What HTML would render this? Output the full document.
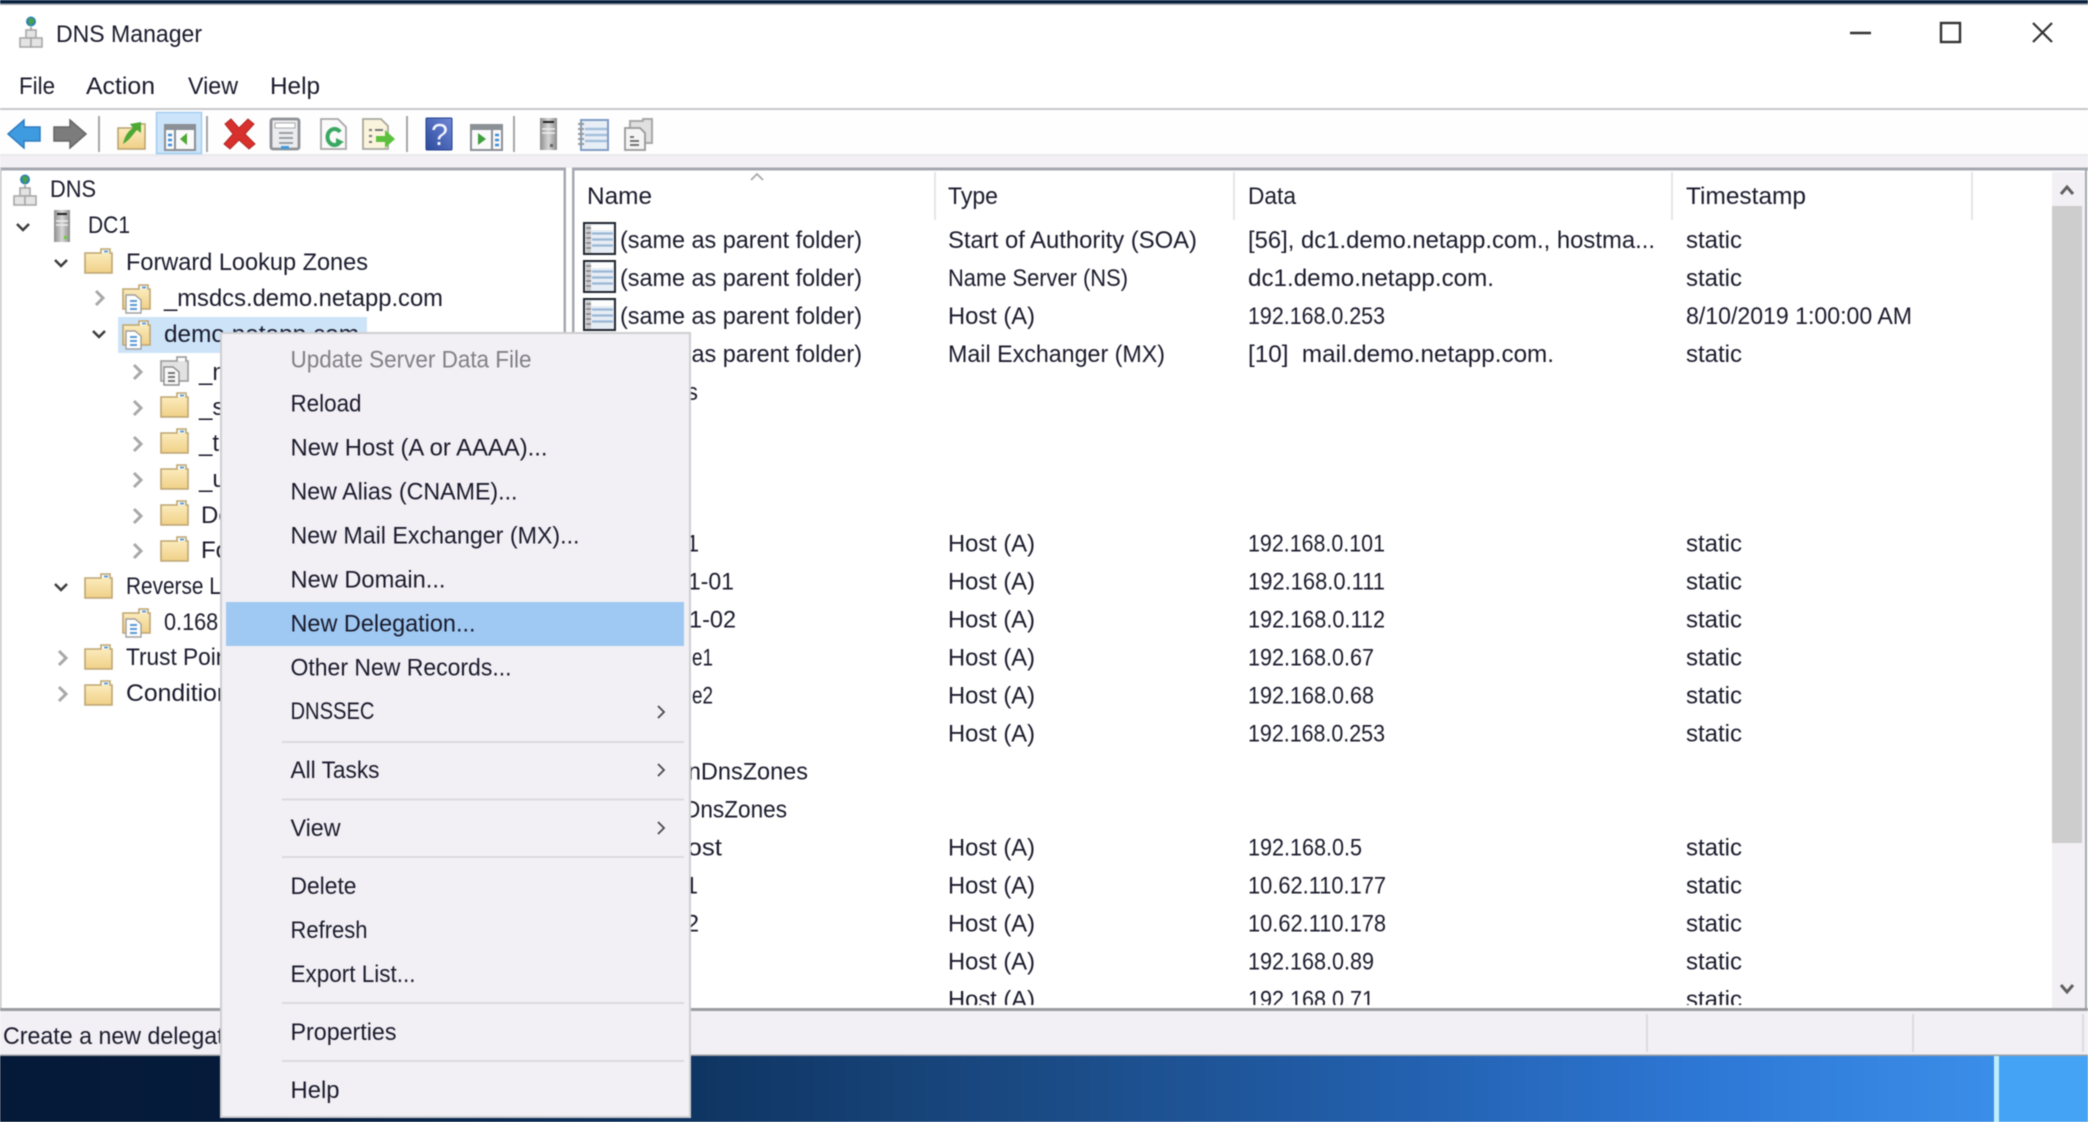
<!DOCTYPE html>
<html lang="en"><head><meta charset="utf-8"><title>DNS Manager</title>
<style>
html,body{margin:0;padding:0;background:#fff;width:2088px;height:1122px;overflow:hidden}
svg{display:block;filter:blur(.55px)}
text{font-family:"Liberation Sans",sans-serif;font-size:24px;fill:#1a1a2c}
</style></head><body>
<svg xmlns="http://www.w3.org/2000/svg" width="2088" height="1122" viewBox="0 0 2088 1122">
<defs>
<linearGradient id="wp" x1="0" x2="1" y1="0" y2="0">
<stop offset="0" stop-color="#051a38"/><stop offset=".12" stop-color="#061c3b"/><stop offset=".33" stop-color="#0f3562"/><stop offset=".5" stop-color="#1b4b85"/><stop offset=".67" stop-color="#2360ae"/><stop offset=".82" stop-color="#2e78d6"/><stop offset=".95" stop-color="#3a8de8"/><stop offset="1" stop-color="#45a2f4"/>
</linearGradient>
<linearGradient id="fy" x1="0" x2="0" y1="0" y2="1"><stop offset="0" stop-color="#fdf0c6"/><stop offset="1" stop-color="#f0d088"/></linearGradient>
<linearGradient id="sv" x1="0" x2="1" y1="0" y2="0"><stop offset="0" stop-color="#8d8d8d"/><stop offset=".5" stop-color="#d6d6d6"/><stop offset="1" stop-color="#8a8a8a"/></linearGradient>
<linearGradient id="hp" x1="0" x2="1" y1="1" y2="0"><stop offset="0" stop-color="#2c4a9c"/><stop offset="1" stop-color="#7088d8"/></linearGradient>
<g id="folder">
<path d="M1 5H17V1H26V5H28V25H1Z" fill="url(#fy)" stroke="#bda673" stroke-width="1.6"/>
<rect x="18" y="2" width="7" height="3" fill="#fff"/><rect x="20" y="2.5" width="4" height="2" fill="#5fa0d8"/>
</g>
<g id="zone">
<path d="M1 5H17V1H26V5H28V25H1Z" fill="url(#fy)" stroke="#bda673" stroke-width="1.6"/>
<rect x="18" y="2" width="7" height="3" fill="#fff"/><rect x="20" y="2.5" width="4" height="2" fill="#5fa0d8"/>
<path d="M4 11H13L19 16V29H4Z" fill="#fff" stroke="#a0a0a0" stroke-width="1.4"/>
<path d="M8 17h7M8 21h7M8 25h7" stroke="#5a9ad6" stroke-width="2"/>
</g>
<g id="zoneg">
<path d="M1 5H17V1H26V5H28V25H1Z" fill="#e2e2e2" stroke="#a2a2a2" stroke-width="1.8"/>
<rect x="18" y="2" width="7" height="3" fill="#fff"/>
<path d="M4 11H13L19 16V29H4Z" fill="#f8f8f8" stroke="#8e8e8e" stroke-width="1.4"/>
<path d="M8 17h7M8 21h7M8 25h7" stroke="#777" stroke-width="2"/>
</g>
<g id="dns">
<circle cx="12" cy="5.500" r="5" fill="#2f7fb8"/><path d="M9.500 2l5 .5 1 3-4 4.500-2-4z" fill="#48a248"/>
<rect x="11" y="11" width="2" height="4" fill="#aaa"/>
<rect x="7" y="14" width="10" height="8" fill="#e4e4e4" stroke="#a8a8a8" stroke-width="1.6"/>
<rect x="1" y="22" width="11" height="9" fill="#e4e4e4" stroke="#a8a8a8" stroke-width="1.6"/>
<rect x="12" y="22" width="11" height="9" fill="#e4e4e4" stroke="#a8a8a8" stroke-width="1.6"/>
</g>
<g id="rec">
<rect x="1" y="1" width="31" height="31" fill="#e6edf5" stroke="#20242e" stroke-width="2"/>
<rect x="3" y="3" width="5" height="28" fill="#c9c9c9"/>
<path d="M3 6h5M3 11h5M3 16h5M3 21h5M3 26h5" stroke="#777" stroke-width="1.200"/>
<rect x="8" y="3" width="22" height="5" fill="#fdfdfd"/>
<path d="M9 11.500h21M9 17.500h21M9 23.500h21" stroke="#9ab8d6" stroke-width="2.200"/>
</g>
</defs>

<!-- backdrop -->
<rect width="2088" height="1122" fill="#fff"/>
<rect width="2088" height="4" fill="#0a2342"/>
<rect y="3.500" width="2088" height="1.500" fill="#a6a8ac"/>
<rect y="1056" width="2088" height="66" fill="url(#wp)"/>
<rect x="1994" y="1056" width="5" height="66" fill="#bdeefb"/>
<rect x="1999" y="1056" width="89" height="66" fill="#45a3f5"/>

<!-- title -->
<use href="#dns" x="19" y="16"/>
<text x="56" y="42" textLength="146" lengthAdjust="spacingAndGlyphs">DNS Manager</text>
<path d="M1850 33h21" stroke="#333" stroke-width="2.400"/>
<rect x="1941" y="23" width="19" height="19" fill="none" stroke="#333" stroke-width="2.400"/>
<path d="M2033 23L2052 42M2052 23L2033 42" stroke="#333" stroke-width="2.200"/>

<!-- menubar -->
<text x="19" y="94" textLength="36" lengthAdjust="spacingAndGlyphs">File</text>
<text x="86" y="94" textLength="69" lengthAdjust="spacingAndGlyphs">Action</text>
<text x="188" y="94" textLength="50" lengthAdjust="spacingAndGlyphs">View</text>
<text x="270" y="94" textLength="50" lengthAdjust="spacingAndGlyphs">Help</text>
<rect y="108" width="2088" height="2" fill="#c8c8cc"/>

<!-- toolbar -->
<rect y="110" width="2088" height="44" fill="#fefefe"/>
<rect y="154" width="2088" height="2" fill="#e9e9ec"/>
<rect y="156" width="2088" height="12" fill="#f2f0f4"/>
<path d="M8 134L24 120V127H40V141H24V148Z" fill="#3f9be0" stroke="#2d7cc0" stroke-width="1.500"/>
<path d="M86 134L70 120V127H54V141H70V148Z" fill="#7c7c7c" stroke="#666" stroke-width="1.500"/>
<path d="M99 116v36M207 116v36M407 116v36M514 116v36" stroke="#a4a6aa" stroke-width="2"/>
<path d="M118 128H136V124H145V149H118Z" fill="url(#fy)" stroke="#b8a26c" stroke-width="1.500"/>
<path d="M123 144C125 134 130 130 133 128L130 124L141 122L141 133L137 130C133 134 130 140 123 144Z" fill="#4ea834"/>
<rect x="156.500" y="112.500" width="45" height="41" fill="#cce4f9" stroke="#a3cdf0" stroke-width="1.500"/>
<g>
<rect x="165" y="125" width="30" height="25" fill="#fafafa" stroke="#8b8f96" stroke-width="2"/><rect x="165" y="125" width="30" height="5" fill="#8b8f96"/>
<path d="M175 130v20" stroke="#8b8f96" stroke-width="2"/>
<path d="M168 135h4M168 140h4M168 145h4" stroke="#3f8fd8" stroke-width="2.500"/>
<path d="M187 133V145L180 139Z" fill="#4ea834"/>
</g>
<path d="M225 124L231 119L239 128L248 119L254 124L245 134L255 144L249 149L239 140L230 149L224 144L233 134Z" fill="#d8302c" stroke="#b02a26"/>
<g>
<rect x="271" y="119" width="28" height="30" rx="2" fill="#ececee" stroke="#8e9298" stroke-width="2.800"/>
<rect x="275" y="123" width="20" height="5" fill="#fff" stroke="#aaa"/>
<path d="M279 133h14M279 138h14M279 143h14" stroke="#9aa0a8" stroke-width="2"/>
<rect x="281" y="146" width="8" height="3" fill="#3f9be0"/>
</g>
<g>
<path d="M321 119H338L346 127V149H321Z" fill="#fafafa" stroke="#a8a8a8" stroke-width="1.800"/>
<path d="M340 132A7 8 0 1 0 340 142" fill="none" stroke="#3aa860" stroke-width="4"/>
<path d="M336 146L344 142L336 138Z" fill="#3aa860"/>
</g>
<g>
<path d="M363 119H381L388 126V149H363Z" fill="#faf4dc" stroke="#a8a8a0" stroke-width="1.800"/>
<path d="M369 130h3M369 136h3M369 142h3M375 130h8" stroke="#777" stroke-width="2"/>
<path d="M376 136H385V130L395 139L385 148V142H376Z" fill="#5cc03c"/>
</g>
<rect x="426" y="118" width="26" height="32" rx="1" fill="url(#hp)" stroke="#23408c" stroke-width="1"/>
<text x="431" y="145" style="font-size:31px;fill:#f4f6fc" textLength="17" lengthAdjust="spacingAndGlyphs">?</text>
<g>
<rect x="471" y="125" width="31" height="25" fill="#fafafa" stroke="#8b8f96" stroke-width="2"/><rect x="471" y="125" width="31" height="5" fill="#8b8f96"/>
<path d="M492 130v20" stroke="#8b8f96" stroke-width="2"/>
<path d="M495 135h4M495 140h4M495 145h4" stroke="#3f8fd8" stroke-width="2.500"/>
<path d="M478 133V145L486 139Z" fill="#3da03a"/>
</g>
<g>
<rect x="540" y="118" width="17" height="32" fill="url(#sv)"/>
<path d="M543 122h11" stroke="#222" stroke-width="2"/><path d="M542 129h13M542 133h13" stroke="#eee" stroke-width="1.500"/>
<rect x="550" y="144" width="3" height="3" fill="#666"/>
</g>
<g>
<rect x="581" y="120" width="27" height="30" fill="#e8eef6" stroke="#7f9cc4" stroke-width="2"/>
<path d="M578 124h6M578 129h6M578 134h6M578 139h6M578 144h6" stroke="#999" stroke-width="2"/>
<path d="M585 129h22M585 135h22M585 141h22" stroke="#a4c0dc" stroke-width="2.500"/>
</g>
<g>
<path d="M630 121H643V119H652V143H630Z" fill="#e0e0e0" stroke="#a8a8a8" stroke-width="2"/>
<path d="M625 128H640L645 133V150H625Z" fill="#f4f4f4" stroke="#989898" stroke-width="1.800"/>
<path d="M630 137h4M630 141h9M630 145h9" stroke="#666" stroke-width="1.800"/>
</g>

<!-- left pane -->
<rect x="0" y="168" width="566" height="842" fill="#fff"/>
<rect x="0" y="167.500" width="566" height="3" fill="#a6a8b2"/>
<rect x="563.500" y="168" width="2.500" height="842" fill="#a6a8b2"/>
<rect x="0" y="168" width="1.500" height="842" fill="#c4c4cc"/>
<!-- right pane -->
<rect x="572" y="168" width="1516" height="842" fill="#fff"/>
<rect x="572" y="167.500" width="1516" height="3" fill="#a6a8b2"/>
<rect x="572" y="168" width="2.500" height="842" fill="#a6a8b2"/>
<rect x="2085" y="168" width="2" height="842" fill="#a6a8b2"/>

<!-- tree -->
<use href="#dns" x="13" y="174"/>
<text x="50" y="197" textLength="46" lengthAdjust="spacingAndGlyphs">DNS</text>
<path d="M17 224L23 230L29 224" fill="none" stroke="#3c3c3c" stroke-width="2.500"/>
<rect x="54" y="210" width="16" height="32" fill="url(#sv)"/><path d="M57 214h10" stroke="#222" stroke-width="2"/><path d="M56 221h12M56 225h12" stroke="#eee" stroke-width="1.500"/><rect x="64" y="236" width="3" height="3" fill="#6ccb3c"/>
<text x="88" y="233" textLength="42" lengthAdjust="spacingAndGlyphs">DC1</text>
<path d="M55 260L61 266L67 260" fill="none" stroke="#3c3c3c" stroke-width="2.500"/>
<use href="#folder" x="84" y="248"/>
<text x="126" y="270" textLength="242" lengthAdjust="spacingAndGlyphs">Forward Lookup Zones</text>
<path d="M96 291L103 298L96 305" fill="none" stroke="#a8a8a8" stroke-width="3"/>
<use href="#zone" x="122" y="284"/>
<text x="164" y="306" textLength="279" lengthAdjust="spacingAndGlyphs">_msdcs.demo.netapp.com</text>
<rect x="118" y="317" width="249" height="36" fill="#cde4f8"/>
<path d="M93 331L99 337L105 331" fill="none" stroke="#3c3c3c" stroke-width="2.500"/>
<use href="#zone" x="122" y="320"/>
<text x="164" y="342" textLength="195" lengthAdjust="spacingAndGlyphs">demo.netapp.com</text>
<path d="M134 365L141 372L134 379M134 401L141 408L134 415M134 437L141 444L134 451M134 473L141 480L134 487M134 509L141 516L134 523M134 544L141 551L134 558" fill="none" stroke="#a8a8a8" stroke-width="3"/>
<use href="#zoneg" x="160" y="356"/>
<use href="#folder" x="160" y="392"/>
<use href="#folder" x="160" y="428"/>
<use href="#folder" x="160" y="464"/>
<use href="#folder" x="160" y="500"/>
<use href="#folder" x="160" y="536"/>
<text x="199" y="380">_msdcs</text>
<text x="199" y="415">_sites</text>
<text x="199" y="451">_tcp</text>
<text x="199" y="487">_udp</text>
<text x="201" y="523">DomainDnsZones</text>
<text x="201" y="558">ForestDnsZones</text>
<path d="M55 584L61 590L67 584" fill="none" stroke="#3c3c3c" stroke-width="2.500"/>
<use href="#folder" x="84" y="573"/>
<text x="126" y="594" textLength="215" lengthAdjust="spacingAndGlyphs">Reverse Lookup Zones</text>
<use href="#zone" x="122" y="608"/>
<text x="164" y="630" textLength="218" lengthAdjust="spacingAndGlyphs">0.168.192.in-addr.arpa</text>
<path d="M59 651L66 658L59 665M59 687L66 694L59 701" fill="none" stroke="#a8a8a8" stroke-width="3"/>
<use href="#folder" x="84" y="644"/>
<text x="126" y="665" textLength="120" lengthAdjust="spacingAndGlyphs">Trust Points</text>
<use href="#folder" x="84" y="680"/>
<text x="126" y="701" textLength="256" lengthAdjust="spacingAndGlyphs">Conditional Forwarders</text>

<!-- list header -->
<path d="M935 172v48M1234 172v48M1672 172v48M1972 172v48" stroke="#e6e6ea" stroke-width="2"/>
<path d="M751 180L757 174L763 180" fill="none" stroke="#a8a8a8" stroke-width="1.800"/>
<text x="587" y="204" textLength="65" lengthAdjust="spacingAndGlyphs">Name</text>
<text x="948" y="204" textLength="50" lengthAdjust="spacingAndGlyphs">Type</text>
<text x="1248" y="204" textLength="48" lengthAdjust="spacingAndGlyphs">Data</text>
<text x="1686" y="204" textLength="120" lengthAdjust="spacingAndGlyphs">Timestamp</text>

<!-- list rows -->
<clipPath id="lc"><rect x="574" y="172" width="1478" height="833"/></clipPath>
<g clip-path="url(#lc)">
<use href="#rec" x="583" y="222"/><use href="#rec" x="583" y="260"/><use href="#rec" x="583" y="298"/>
<text x="620" y="248" textLength="242" lengthAdjust="spacingAndGlyphs">(same as parent folder)</text>
<text x="620" y="286" textLength="242" lengthAdjust="spacingAndGlyphs">(same as parent folder)</text>
<text x="620" y="324" textLength="242" lengthAdjust="spacingAndGlyphs">(same as parent folder)</text>
<text x="620" y="362" textLength="242" lengthAdjust="spacingAndGlyphs">(same as parent folder)</text>
<text x="620" y="400" textLength="78" lengthAdjust="spacingAndGlyphs">_msdcs</text>
<text x="620" y="551.500" textLength="79" lengthAdjust="spacingAndGlyphs">cluster1</text>
<text x="620" y="589.500" textLength="114" lengthAdjust="spacingAndGlyphs">cluster1-01</text>
<text x="620" y="627.500" textLength="116" lengthAdjust="spacingAndGlyphs">cluster1-02</text>
<text x="692" y="665.500" textLength="21" lengthAdjust="spacingAndGlyphs">e1</text>
<text x="692" y="703.500" textLength="21" lengthAdjust="spacingAndGlyphs">e2</text>
<text x="620" y="779.500" textLength="188" lengthAdjust="spacingAndGlyphs">DomainDnsZones</text>
<text x="620" y="817.500" textLength="167" lengthAdjust="spacingAndGlyphs">ForestDnsZones</text>
<text x="620" y="855.500" textLength="102" lengthAdjust="spacingAndGlyphs">localhost</text>
<text x="620" y="893.500" textLength="78" lengthAdjust="spacingAndGlyphs">server1</text>
<text x="620" y="931.500" textLength="79" lengthAdjust="spacingAndGlyphs">server2</text>

<text x="948" y="248" textLength="249" lengthAdjust="spacingAndGlyphs">Start of Authority (SOA)</text>
<text x="948" y="286" textLength="180" lengthAdjust="spacingAndGlyphs">Name Server (NS)</text>
<text x="948" y="324" textLength="87" lengthAdjust="spacingAndGlyphs">Host (A)</text>
<text x="948" y="362" textLength="217" lengthAdjust="spacingAndGlyphs">Mail Exchanger (MX)</text>
<text x="948" y="551.500" textLength="87" lengthAdjust="spacingAndGlyphs">Host (A)</text>
<text x="948" y="589.500" textLength="87" lengthAdjust="spacingAndGlyphs">Host (A)</text>
<text x="948" y="627.500" textLength="87" lengthAdjust="spacingAndGlyphs">Host (A)</text>
<text x="948" y="665.500" textLength="87" lengthAdjust="spacingAndGlyphs">Host (A)</text>
<text x="948" y="703.500" textLength="87" lengthAdjust="spacingAndGlyphs">Host (A)</text>
<text x="948" y="741.500" textLength="87" lengthAdjust="spacingAndGlyphs">Host (A)</text>
<text x="948" y="855.500" textLength="87" lengthAdjust="spacingAndGlyphs">Host (A)</text>
<text x="948" y="893.500" textLength="87" lengthAdjust="spacingAndGlyphs">Host (A)</text>
<text x="948" y="931.500" textLength="87" lengthAdjust="spacingAndGlyphs">Host (A)</text>
<text x="948" y="969.500" textLength="87" lengthAdjust="spacingAndGlyphs">Host (A)</text>
<text x="948" y="1007.500" textLength="87" lengthAdjust="spacingAndGlyphs">Host (A)</text>

<text x="1248" y="248" textLength="407" lengthAdjust="spacingAndGlyphs">[56], dc1.demo.netapp.com., hostma...</text>
<text x="1248" y="286" textLength="246" lengthAdjust="spacingAndGlyphs">dc1.demo.netapp.com.</text>
<text x="1248" y="324" textLength="137" lengthAdjust="spacingAndGlyphs">192.168.0.253</text>
<text x="1248" y="362" textLength="306" lengthAdjust="spacingAndGlyphs" xml:space="preserve">[10]  mail.demo.netapp.com.</text>
<text x="1248" y="551.500" textLength="137" lengthAdjust="spacingAndGlyphs">192.168.0.101</text>
<text x="1248" y="589.500" textLength="137" lengthAdjust="spacingAndGlyphs">192.168.0.111</text>
<text x="1248" y="627.500" textLength="137" lengthAdjust="spacingAndGlyphs">192.168.0.112</text>
<text x="1248" y="665.500" textLength="126" lengthAdjust="spacingAndGlyphs">192.168.0.67</text>
<text x="1248" y="703.500" textLength="126" lengthAdjust="spacingAndGlyphs">192.168.0.68</text>
<text x="1248" y="741.500" textLength="137" lengthAdjust="spacingAndGlyphs">192.168.0.253</text>
<text x="1248" y="855.500" textLength="114" lengthAdjust="spacingAndGlyphs">192.168.0.5</text>
<text x="1248" y="893.500" textLength="138" lengthAdjust="spacingAndGlyphs">10.62.110.177</text>
<text x="1248" y="931.500" textLength="138" lengthAdjust="spacingAndGlyphs">10.62.110.178</text>
<text x="1248" y="969.500" textLength="126" lengthAdjust="spacingAndGlyphs">192.168.0.89</text>
<text x="1248" y="1007.500" textLength="126" lengthAdjust="spacingAndGlyphs">192.168.0.71</text>

<text x="1686" y="248" textLength="56" lengthAdjust="spacingAndGlyphs">static</text>
<text x="1686" y="286" textLength="56" lengthAdjust="spacingAndGlyphs">static</text>
<text x="1686" y="324" textLength="226" lengthAdjust="spacingAndGlyphs">8/10/2019 1:00:00 AM</text>
<text x="1686" y="362" textLength="56" lengthAdjust="spacingAndGlyphs">static</text>
<text x="1686" y="551.500" textLength="56" lengthAdjust="spacingAndGlyphs">static</text>
<text x="1686" y="589.500" textLength="56" lengthAdjust="spacingAndGlyphs">static</text>
<text x="1686" y="627.500" textLength="56" lengthAdjust="spacingAndGlyphs">static</text>
<text x="1686" y="665.500" textLength="56" lengthAdjust="spacingAndGlyphs">static</text>
<text x="1686" y="703.500" textLength="56" lengthAdjust="spacingAndGlyphs">static</text>
<text x="1686" y="741.500" textLength="56" lengthAdjust="spacingAndGlyphs">static</text>
<text x="1686" y="855.500" textLength="56" lengthAdjust="spacingAndGlyphs">static</text>
<text x="1686" y="893.500" textLength="56" lengthAdjust="spacingAndGlyphs">static</text>
<text x="1686" y="931.500" textLength="56" lengthAdjust="spacingAndGlyphs">static</text>
<text x="1686" y="969.500" textLength="56" lengthAdjust="spacingAndGlyphs">static</text>
<text x="1686" y="1007.500" textLength="56" lengthAdjust="spacingAndGlyphs">static</text>
</g>

<!-- scrollbar -->
<rect x="2052" y="172" width="33" height="836" fill="#f2f0f4"/>
<rect x="2052" y="206" width="30" height="637" fill="#cdcdcd"/>
<path d="M2061 194L2067 187L2073 194" fill="none" stroke="#606060" stroke-width="3"/>
<path d="M2061 985L2067 992L2073 985" fill="none" stroke="#606060" stroke-width="3"/>

<!-- status bar -->
<rect x="0" y="1008" width="2088" height="48" fill="#f2f0f4"/>
<rect x="0" y="1008" width="2088" height="3" fill="#9a9ca0"/>
<rect x="0" y="1054.500" width="2088" height="1.500" fill="#a0a2a6"/>
<path d="M1647 1014v38M1913 1014v38M2083 1014v38" stroke="#d8d8dc" stroke-width="1.600"/>
<text x="3" y="1044" textLength="258" lengthAdjust="spacingAndGlyphs">Create a new delegation.</text>

<!-- context menu -->
<rect x="221" y="333" width="469" height="784" fill="#f2f0f4" stroke="#cfcfd2" stroke-width="2"/>
<rect x="226" y="602" width="458" height="44" fill="#9fc9f2"/>
<text x="290.500" y="367.600" textLength="241" lengthAdjust="spacingAndGlyphs" style="fill:#808086">Update Server Data File</text>
<text x="290.500" y="411.600" textLength="71" lengthAdjust="spacingAndGlyphs">Reload</text>
<text x="290.500" y="455.600" textLength="257" lengthAdjust="spacingAndGlyphs">New Host (A or AAAA)...</text>
<text x="290.500" y="499.600" textLength="227" lengthAdjust="spacingAndGlyphs">New Alias (CNAME)...</text>
<text x="290.500" y="543.600" textLength="289" lengthAdjust="spacingAndGlyphs">New Mail Exchanger (MX)...</text>
<text x="290.500" y="587.600" textLength="155" lengthAdjust="spacingAndGlyphs">New Domain...</text>
<text x="290.500" y="631.600" textLength="185" lengthAdjust="spacingAndGlyphs">New Delegation...</text>
<text x="290.500" y="675.600" textLength="221" lengthAdjust="spacingAndGlyphs">Other New Records...</text>
<text x="290.500" y="719" textLength="84" lengthAdjust="spacingAndGlyphs">DNSSEC</text>
<text x="290.500" y="778" textLength="89" lengthAdjust="spacingAndGlyphs">All Tasks</text>
<text x="290.500" y="836" textLength="50" lengthAdjust="spacingAndGlyphs">View</text>
<text x="290.500" y="894" textLength="66" lengthAdjust="spacingAndGlyphs">Delete</text>
<text x="290.500" y="938" textLength="77" lengthAdjust="spacingAndGlyphs">Refresh</text>
<text x="290.500" y="982" textLength="125" lengthAdjust="spacingAndGlyphs">Export List...</text>
<text x="290.500" y="1040" textLength="106" lengthAdjust="spacingAndGlyphs">Properties</text>
<text x="290.500" y="1098" textLength="49" lengthAdjust="spacingAndGlyphs">Help</text>
<path d="M282 742h402M282 799.500h402M282 857h402M282 1003h402M282 1061h402" stroke="#dcdade" stroke-width="2"/>
<path d="M658 706L664 712L658 718M658 764L664 770L658 776M658 822L664 828L658 834" fill="none" stroke="#4a4a4a" stroke-width="1.800"/>
</svg>
</body></html>
